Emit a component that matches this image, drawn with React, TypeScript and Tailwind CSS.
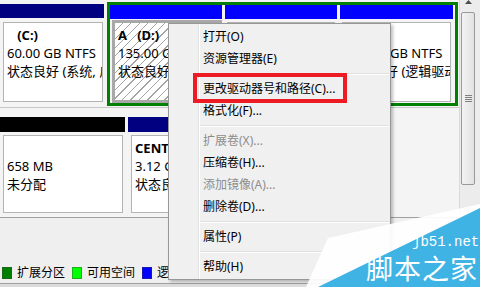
import React from 'react';

type Item = { t?: string; off?: boolean; sep?: boolean };

const menuItems: Item[] = [
  { t: '打开(O)' },
  { t: '资源管理器(E)' },
  { sep: true },
  { t: '更改驱动器号和路径(C)...' },
  { t: '格式化(F)...' },
  { sep: true },
  { t: '扩展卷(X)...', off: true },
  { t: '压缩卷(H)...' },
  { t: '添加镜像(A)...', off: true },
  { t: '删除卷(D)...' },
  { sep: true },
  { t: '属性(P)' },
  { sep: true },
  { t: '帮助(H)' },
];

const hatch =
  'bg-[repeating-linear-gradient(135deg,#ffffff_0px,#ffffff_5px,#a4a4a4_5px,#a4a4a4_6px)]';

function Volume({
  label,
  size,
  status,
  hatched,
  className = '',
}: {
  label: string;
  size: string;
  status: string;
  hatched?: boolean;
  className?: string;
}) {
  return (
    <div
      className={
        hatched
          ? `border-[3px] border-[#a8a8a8] ${hatch} ${className}`
          : `border border-[#b4b4b4] bg-white ${className}`
      }
    >
      <div className="overflow-hidden h-full px-[3px] pt-[3px] leading-[18px] text-[13px] whitespace-pre">
        <div className="font-bold">{label}</div>
        <div>{size}</div>
        <div>{status}</div>
      </div>
    </div>
  );
}

function ContextMenu() {
  return (
    <div className="absolute left-[168px] top-[23px] w-[223px] h-[257px] bg-[#f0f0f0] border border-[#979797] shadow-[2px_2px_3px_rgba(0,0,0,0.25)] flex text-[12px]">
      <div className="w-[30px] border-r border-[#e2e3e3]" />
      <div className="flex-1 flex flex-col pt-[2px] pr-[1px] border-l border-white">
        {menuItems.map((it, i) =>
          it.sep ? (
            <div key={i} className="h-[8px] flex flex-col justify-center">
              <div className="h-px bg-[#e0e0e0]" />
              <div className="h-px bg-white" />
            </div>
          ) : (
            <div
              key={i}
              className={`h-[22px] flex items-center pl-[3px] whitespace-nowrap ${
                it.off ? 'text-[#8d8d8d]' : 'text-black'
              }`}
            >
              {it.t}
            </div>
          )
        )}
      </div>
    </div>
  );
}

function Scrollbar() {
  return (
    <div className="w-[21px] h-full bg-[#ececec] border-l border-[#dadada] flex flex-col">
      <div className="h-[9px] flex justify-center pr-[4px]">
        <svg width="7" height="4" viewBox="0 0 7 4">
          <path d="M0 4 L3.5 0 L7 4 Z" fill="#4d4d4d" />
        </svg>
      </div>
      <div className="pt-[3px] pl-[1px]">
        <div className="w-[14px] h-[173px] rounded-[2px] border border-[#9a9a9a] bg-[linear-gradient(90deg,#f3f3f3,#e2e2e2)] flex items-center justify-center">
          <div className="flex flex-col gap-[1px]">
            <div className="w-[7px] h-px bg-[#808080]" />
            <div className="w-[7px] h-px bg-[#808080]" />
            <div className="w-[7px] h-px bg-[#808080]" />
            <div className="w-[7px] h-px bg-[#808080]" />
          </div>
        </div>
      </div>
    </div>
  );
}

function Legend() {
  const items = [
    { c: 'bg-[#008000]', t: '扩展分区' },
    { c: 'bg-[#00ff00]', t: '可用空间' },
    { c: 'bg-[#0000ff]', t: '逻辑驱动器' },
  ];
  return (
    <div className="h-[18px] flex items-center pl-[2px] gap-[7px] text-[12px]">
      {items.map((it) => (
        <div key={it.t} className="flex items-center gap-[5px]">
          <div className={`w-[10px] h-[12px] ${it.c} border border-[#404040]/40`} />
          <span>{it.t}</span>
        </div>
      ))}
    </div>
  );
}

function Watermark() {
  return (
    <>
      <svg className="absolute left-[265px] top-[200px]" width="215" height="87" viewBox="265 200 215 87">
        <polygon points="306,287 328,238 480,204 480,287" fill="#ffffff" opacity="0.92" />
        <polygon points="318,287 480,208 480,287" fill="#40b3e5" />
      </svg>
      <div className="absolute left-[412px] top-[234px] text-[14px] leading-[16px] text-white font-['Liberation_Mono',monospace]">
        jb51.net
      </div>
      <div className="absolute left-[366px] top-[253px] text-[27px] leading-[30px] text-white tracking-[1px] font-['Noto_Sans_CJK_SC',sans-serif]">
        脚本之家
      </div>
    </>
  );
}

export default function App() {
  return (
    <div className="relative w-[480px] h-[287px] overflow-hidden bg-[#efefef] text-black font-['Noto_Sans','Noto_Sans_CJK_SC',sans-serif] flex">
      <div className="w-[459px] flex flex-col">
        {/* disk 0 */}
        <div className="h-[107px] flex bg-[#f4f4f4]">
          <div className="w-[105px] pt-[4px]">
            <div className="h-[14px] w-[104px] bg-[#000080]" />
            <Volume
              className="mt-[4px] ml-[3px] w-[100px] h-[80px]"
              label="   (C:)"
              size="60.00 GB NTFS"
              status="状态良好 (系统, 启动, 页面文件, 活动, 故障转储, 主分区)"
            />
          </div>
          <div className="ml-[2px] mt-[2px] w-[351px] h-[104px] border-[3px] border-[#008000] flex gap-[3px]">
            <div className="w-[112px]">
              <div className="h-[14px] bg-[#0000ff]" />
              <Volume
                hatched
                className="mt-[1px] ml-[2px] h-[83px]"
                label="A   (D:)"
                size="135.00 GB NTFS"
                status="状态良好 (逻辑驱动器)"
              />
            </div>
            <div className="w-[112px]">
              <div className="h-[14px] bg-[#0000ff]" />
              <Volume
                className="mt-[3px] mx-[2px] h-[80px]"
                label="   (E:)"
                size="100.00 GB NTFS"
                status="状态良好 (逻辑驱动器)"
              />
            </div>
            <div className="w-[113px]">
              <div className="h-[14px] bg-[#0000ff]" />
              <Volume
                className="mt-[3px] mx-[2px] h-[80px]"
                label="   (F:)"
                size="100.00 GB NTFS"
                status="状态良好 (逻辑驱动器)"
              />
            </div>
          </div>
        </div>
        <div className="h-px bg-[#c8c8c8]" />

        {/* disk 1 */}
        <div className="h-[109px] flex pt-[9px] bg-[#f4f4f4]">
          <div className="w-[125px]">
            <div className="h-[15px] bg-black" />
            <Volume className="mt-[3px] ml-[3px] w-[120px] h-[78px]" label=" " size="658 MB" status="未分配" />
          </div>
          <div className="ml-[3px] w-[220px]">
            <div className="h-[15px] bg-[#000080]" />
            <Volume
              className="mt-[3px] ml-[3px] w-[214px] h-[78px]"
              label="CENTOS"
              size="3.12 GB FAT32"
              status="状态良好 (主分区)"
            />
          </div>
        </div>
        <div className="h-px bg-[#a0a0a0]" />
        <div className="flex-1" />
        <Legend />
        <div className="h-px bg-[#a0a0a0] mt-[1px]" />
        <div className="h-[3px] bg-[#dcdcdc]" />
      </div>
      <Scrollbar />

      <ContextMenu />
      <div className="absolute left-[193px] top-[73px] w-[154px] h-[30px] border-[4px] border-[#ed1c24]" />
      <Watermark />
    </div>
  );
}
